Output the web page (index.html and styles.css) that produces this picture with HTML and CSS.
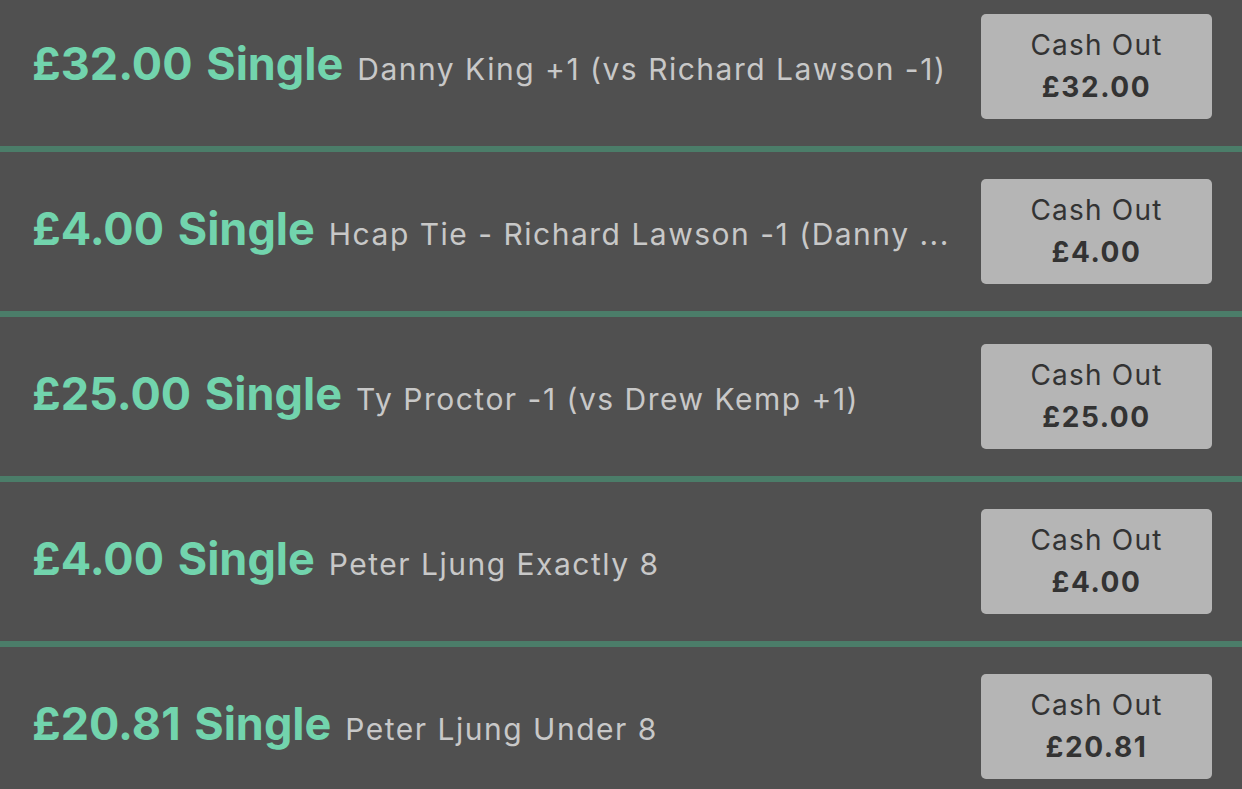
FILE: index.html
```html
<!DOCTYPE html>
<html lang="en">
<head>
<meta charset="utf-8">
<title>Open Bets</title>
<link rel="stylesheet" href="styles.css">
</head>
<body>
<div class="list">
  <div class="bet">
    <div class="info"><span class="stake">£32.00 Single</span><span class="sel">Danny King +1 (vs Richard Lawson -1)</span></div>
    <button class="cash"><span class="lbl">Cash Out</span><span class="amt">£32.00</span></button>
  </div>
  <div class="bet">
    <div class="info"><span class="stake">£4.00 Single</span><span class="sel">Hcap Tie - Richard Lawson -1 (Danny ...</span></div>
    <button class="cash"><span class="lbl">Cash Out</span><span class="amt">£4.00</span></button>
  </div>
  <div class="bet">
    <div class="info"><span class="stake">£25.00 Single</span><span class="sel">Ty Proctor -1 (vs Drew Kemp +1)</span></div>
    <button class="cash"><span class="lbl">Cash Out</span><span class="amt">£25.00</span></button>
  </div>
  <div class="bet">
    <div class="info"><span class="stake">£4.00 Single</span><span class="sel">Peter Ljung Exactly 8</span></div>
    <button class="cash"><span class="lbl">Cash Out</span><span class="amt">£4.00</span></button>
  </div>
  <div class="bet">
    <div class="info"><span class="stake">£20.81 Single</span><span class="sel">Peter Ljung Under 8</span></div>
    <button class="cash"><span class="lbl">Cash Out</span><span class="amt">£20.81</span></button>
  </div>
</div>
</body>
</html>
```

FILE: styles.css
```css
html, body {
  margin: 0;
  padding: 0;
  background: #505050;
  overflow: hidden;
}
body {
  font-family: Inter, "Noto Sans", sans-serif;
  height: 789px;
}
.list {
  display: flex;
  flex-direction: column;
  gap: 6px;
  background: #4b7d69;
  margin-top: -13px;
}
.bet {
  height: 159px;
  box-sizing: border-box;
  background: #505050;
  display: flex;
  align-items: center;
  padding: 0 30px 0 32px;
  gap: 24px;
}
.info {
  flex: 1;
  min-width: 0;
  white-space: nowrap;
  color: #c8c8c8;
  font-size: 30px;
  padding-bottom: 6px;
}
.stake {
  color: #72d4ad;
  font-weight: 700;
  font-size: 45px;
  word-spacing: 3px;
  margin-right: 14px;
}
.sel {
  font-weight: 400;
  letter-spacing: 1.5px;
}
.cash {
  width: 231px;
  height: 105px;
  flex: none;
  border: none;
  border-radius: 5px;
  background: #b5b5b5;
  color: #333333;
  font-family: inherit;
  display: flex;
  flex-direction: column;
  align-items: center;
  justify-content: center;
  padding: 0 0 2px 0;
}
.lbl {
  font-size: 28px;
  line-height: 42px;
  font-weight: 400;
  letter-spacing: 1.2px;
}
.amt {
  font-size: 28px;
  line-height: 42px;
  font-weight: 700;
  letter-spacing: 1.6px;
}
```
